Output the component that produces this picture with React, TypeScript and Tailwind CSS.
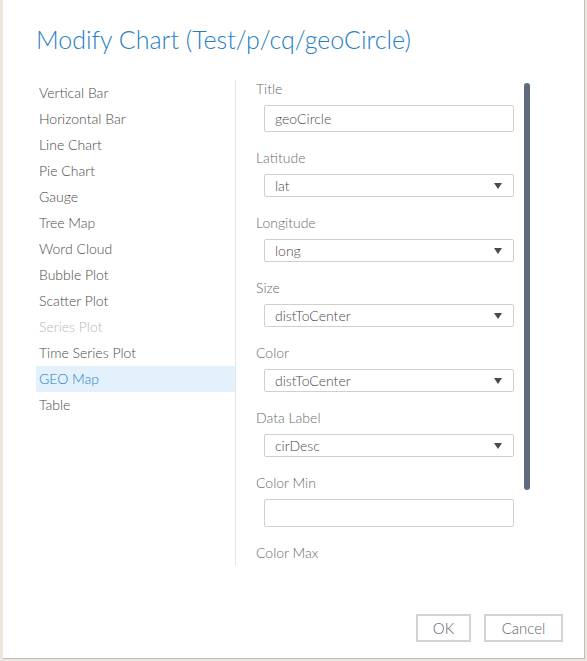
import React from "react";

const chartTypes = [
  { name: "Vertical Bar" },
  { name: "Horizontal Bar" },
  { name: "Line Chart" },
  { name: "Pie Chart" },
  { name: "Gauge" },
  { name: "Tree Map" },
  { name: "Word Cloud" },
  { name: "Bubble Plot" },
  { name: "Scatter Plot" },
  { name: "Series Plot", disabled: true },
  { name: "Time Series Plot" },
  { name: "GEO Map", active: true },
  { name: "Table" },
];

type Field = { label: string; kind: "text" | "select"; value: string };

const fields: Field[] = [
  { label: "Title", kind: "text", value: "geoCircle" },
  { label: "Latitude", kind: "select", value: "lat" },
  { label: "Longitude", kind: "select", value: "long" },
  { label: "Size", kind: "select", value: "distToCenter" },
  { label: "Color", kind: "select", value: "distToCenter" },
  { label: "Data Label", kind: "select", value: "cirDesc" },
  { label: "Color Min", kind: "text", value: "" },
  { label: "Color Max", kind: "text", value: "" },
];

const Caret = () => (
  <svg width="8" height="6" viewBox="0 0 8 6" className="shrink-0">
    <path d="M0 0 L8 0 L4 6 Z" fill="#4a4a4a" />
  </svg>
);

const FormField: React.FC<{ field: Field }> = ({ field }) => (
  <div className="mb-[17px]">
    <div className="text-[14px] leading-[18px] text-[#6b6b6b]">{field.label}</div>
    {field.kind === "text" ? (
      <div
        className={`mt-[7px] ml-[8px] w-[250px] border border-[#cfcfcf] rounded-[2px] bg-white pl-[10px] text-[14px] text-[#4a4a4a] flex items-center ${
          field.label === "Title" ? "h-[27px]" : "h-[28px]"
        }`}
      >
        {field.value}
      </div>
    ) : (
      <div className="mt-[7px] ml-[8px] w-[250px] h-[23px] border border-[#cfcfcf] rounded-[2px] bg-white pl-[10px] pr-[11px] text-[14px] text-[#4a4a4a] flex items-center justify-between">
        <span>{field.value}</span>
        <Caret />
      </div>
    )}
  </div>
);

export default function App() {
  return (
    <div
      className="w-[587px] h-[661px] bg-[#ece7dc] pl-[3px] overflow-hidden font-light"
      style={{ fontFamily: "Lato, 'Open Sans', sans-serif" }}
    >
      <div className="w-[582px] h-[659px] bg-white border-r border-b border-[#bdbdbd] flex flex-col">
        <h1 className="pt-[24px] pl-[33px] h-[80px] text-[25px] leading-[30px] font-light text-[#1f80c4]">
          Modify Chart (Test/p/cq/geoCircle)
        </h1>

        <div className="flex h-[485px] ml-[33px]">
          <ul className="w-[200px] border-r border-[#e3e3e3]">
            {chartTypes.map((c) => (
              <li
                key={c.name}
                className={`h-[26px] leading-[26px] pl-[3px] text-[14px] ${
                  c.active
                    ? "bg-[#e3f1fc] text-[#1f80c4]"
                    : c.disabled
                    ? "text-[#b8b8b8]"
                    : "text-[#4a4a4a]"
                }`}
              >
                {c.name}
              </li>
            ))}
          </ul>

          <div className="flex pl-[20px] overflow-hidden">
            <div className="w-[258px] overflow-hidden">
              {fields.map((f) => (
                <FormField key={f.label} field={f} />
              ))}
            </div>
            <div className="ml-[10px] mt-[3px] w-[6px] h-[407px] rounded-full bg-[#5f6a7c]" />
          </div>
        </div>

        <div className="flex justify-end gap-[13px] mt-[49px] pr-[21px]">
          <button className="w-[55px] h-[28px] border-2 border-[#d2d2d2] text-[15px] text-[#5e6670] bg-white">
            OK
          </button>
          <button className="w-[79px] h-[28px] border-2 border-[#d2d2d2] text-[15px] text-[#5e6670] bg-white">
            Cancel
          </button>
        </div>
      </div>
    </div>
  );
}
